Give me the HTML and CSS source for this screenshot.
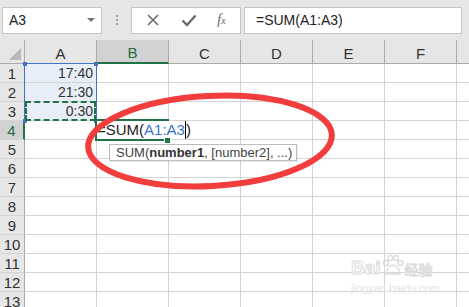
FILE: index.html
```html
<!DOCTYPE html>
<html lang="en">
<head>
  <meta charset="UTF-8">
  <title>SUM</title>
  <link rel="stylesheet" href="styles.css">
</head>
<body>
  <div class="app">
    <div class="formula-bar">
      <div class="name-box">
        <span>A3</span>
        <span class="drop"></span>
      </div>
      <div class="grip"><i></i><i></i><i></i></div>
      <div class="fx-buttons">
        <svg width="14" height="14" viewBox="0 0 14 14"><path d="M2 2 L12 12 M12 2 L2 12" stroke="#6b6b6b" stroke-width="1.6" fill="none"/></svg>
        <svg width="16" height="14" viewBox="0 0 16 14"><path d="M1.5 7.5 L6 12 L14.5 2.5" stroke="#6b6b6b" stroke-width="2.4" fill="none"/></svg>
        <span class="fx">f<small>x</small></span>
      </div>
      <div class="formula-input">=SUM(A1:A3)</div>
    </div>

    <div class="sheet" id="sheet"></div>

    <div class="range-box"><b class="c1"></b><b class="c2"></b><b class="c3"></b><b class="c4"></b></div>
    <div class="copy-box"></div>
    <div class="active-cell"></div>
    <div class="edit-text">=SUM(<span class="ref">A1:A3</span><span class="cursor"></span>)</div>
    <b class="handle"></b>
    <div class="tooltip">SUM(<b>number1</b>, [number2], ...)</div>

    <svg class="mark" width="469" height="307" viewBox="0 0 469 307">
      <ellipse cx="210" cy="141" rx="122" ry="45" transform="rotate(-3 210 141)" fill="none" stroke="#f23d3d" stroke-width="6"/>
    </svg>

    <div class="watermark">
      <div class="wm-top">
        <span class="wm-bai">Bai</span>
        <svg width="24" height="24" viewBox="0 0 24 24"><g fill="none" stroke="#dcdcdc" stroke-width="1.4"><circle cx="5" cy="9" r="2.5"/><circle cx="9.5" cy="4" r="2.5"/><circle cx="15" cy="4" r="2.5"/><circle cx="19.5" cy="9" r="2.5"/><path d="M5 20 Q6 12 12 11 Q18 12 19 20 Z"/></g></svg>
        <span class="wm-cn">经验</span>
      </div>
      <div class="wm-url">jingyan.baidu.com</div>
    </div>
  </div>

  <script>
    const sheet = document.getElementById('sheet');
    const cols = ['A', 'B', 'C', 'D', 'E', 'F', ''];
    const values = { 1: '17:40', 2: '21:30', 3: '0:30' };
    let html = '<div class="corner"><span></span></div>';
    cols.forEach(c => {
      html += `<div class="col-head${c === 'B' ? ' on' : ''}">${c}</div>`;
    });
    for (let r = 1; r <= 13; r++) {
      html += `<div class="row-head${r === 4 ? ' on' : ''}">${r}</div>`;
      cols.forEach(c => {
        let cls = 'cell';
        let text = '';
        if (c === 'A' && values[r]) {
          cls += ' picked';
          text = values[r];
        }
        html += `<div class="${cls}">${text}</div>`;
      });
    }
    sheet.innerHTML = html;
  </script>
</body>
</html>
```

FILE: styles.css
```css
body {
  margin: 0;
  font-family: 'Liberation Sans', Arial, sans-serif;
  background-color: #fff;
  overflow: hidden;
}

.app {
  position: relative;
  width: 469px;
  height: 307px;
  overflow: hidden;
}

.formula-bar {
  display: flex;
  align-items: center;
  height: 40px;
  background-color: #e6e6e6;
  padding-left: 2px;
}

.name-box {
  display: flex;
  align-items: center;
  justify-content: space-between;
  width: 100px;
  height: 27px;
  box-sizing: border-box;
  background-color: #fff;
  border: 1px solid #c6c6c6;
  padding: 0 6px 0 6px;
  font-size: 14px;
  color: #222;
}

.drop {
  width: 0;
  height: 0;
  border-left: 4px solid transparent;
  border-right: 4px solid transparent;
  border-top: 4px solid #777;
}

.grip {
  display: flex;
  flex-direction: column;
  gap: 2px;
  margin: 0 13px 0 14px;
}

.grip i {
  width: 2px;
  height: 2px;
  background-color: #a0a0a0;
}

.fx-buttons {
  display: flex;
  align-items: center;
  justify-content: space-around;
  width: 110px;
  height: 27px;
  box-sizing: border-box;
  background-color: #fff;
  border: 1px solid #c6c6c6;
  padding: 0 4px;
}

.fx {
  font-family: 'Liberation Serif', serif;
  font-style: italic;
  font-size: 14px;
  color: #666;
}

.fx small {
  font-size: 10px;
}

.formula-input {
  width: 218px;
  height: 27px;
  box-sizing: border-box;
  margin-left: 3px;
  background-color: #fff;
  border: 1px solid #c6c6c6;
  padding: 4px 0 0 11px;
  font-size: 14px;
  color: #222;
}

.sheet {
  display: grid;
  grid-template-columns: 25px repeat(7, 72px);
  grid-template-rows: 24px repeat(13, 19px);
}

.corner,
.col-head,
.row-head {
  background-color: #e6e6e6;
  color: #333;
  font-size: 15px;
  box-sizing: border-box;
}

.corner {
  display: flex;
  align-items: flex-end;
  justify-content: flex-end;
  border-right: 1px solid #ababab;
  border-bottom: 1px solid #ababab;
  padding: 0 3px 3px 0;
}

.corner span {
  width: 0;
  height: 0;
  border-left: 12px solid transparent;
  border-bottom: 12px solid #b9b9b9;
}

.col-head {
  display: flex;
  align-items: flex-end;
  justify-content: center;
  padding-bottom: 1px;
  border-right: 1px solid #ababab;
  border-bottom: 1px solid #ababab;
}

.col-head.on {
  background-color: #d2d2d2;
  color: #1e6b3e;
  border-bottom: 2px solid #217346;
}

.row-head {
  display: flex;
  align-items: center;
  justify-content: center;
  border-right: 1px solid #ababab;
  border-bottom: 1px solid #d4d4d4;
}

.row-head.on {
  background-color: #d2d2d2;
  color: #1e6b3e;
  border-right: 2px solid #217346;
}

.cell {
  box-sizing: border-box;
  border-right: 1px solid #d4d4d4;
  border-bottom: 1px solid #d4d4d4;
  font-size: 14px;
  color: #333;
  text-align: right;
  padding: 1px 3px 0 0;
}

.cell.picked {
  background-color: #e8eef8;
}

.range-box {
  position: absolute;
  left: 24px;
  top: 63px;
  width: 73px;
  height: 58px;
  box-sizing: border-box;
  border: 1.5px solid #4472c4;
  border-bottom: none;
}

.range-box b {
  position: absolute;
  width: 4px;
  height: 4px;
  background-color: #4472c4;
}

.range-box .c1 { left: -2px; top: -2px; }
.range-box .c2 { right: -2px; top: -2px; }
.range-box .c3 { left: -2px; bottom: -2px; }
.range-box .c4 { right: -2px; bottom: -2px; }

.copy-box {
  position: absolute;
  left: 25px;
  top: 101px;
  width: 71px;
  height: 20px;
  box-sizing: border-box;
  border: 2px dashed #217346;
}

.active-cell {
  position: absolute;
  left: 95px;
  top: 119px;
  width: 74px;
  height: 22px;
  box-sizing: border-box;
  border: 2px solid #217346;
}

.handle {
  position: absolute;
  left: 164px;
  top: 137px;
  width: 5px;
  height: 5px;
  background-color: #217346;
  border: 1px solid #fff;
}

.edit-text {
  position: absolute;
  left: 97px;
  top: 121px;
  height: 18px;
  padding-right: 2px;
  background-color: #fff;
  font-size: 15px;
  line-height: 18px;
  color: #222;
  white-space: nowrap;
  display: flex;
  align-items: center;
}

.edit-text .ref {
  color: #3a73c9;
}

.cursor {
  width: 1px;
  height: 18px;
  background-color: #000;
}

.tooltip {
  position: absolute;
  left: 109px;
  top: 144px;
  height: 17px;
  box-sizing: border-box;
  padding: 0 4px 0 6px;
  background-color: #fff;
  border: 1px solid #bdbdbd;
  box-shadow: 1px 1px 1px rgba(0, 0, 0, 0.08);
  font-size: 13px;
  line-height: 15px;
  color: #444;
  white-space: nowrap;
}

.tooltip b {
  color: #333;
}

.mark {
  position: absolute;
  left: 0;
  top: 0;
}

.watermark {
  position: absolute;
  left: 351px;
  top: 254px;
  color: #dadada;
}

.wm-top {
  display: flex;
  align-items: flex-end;
}

.wm-bai {
  font-size: 19px;
  font-weight: bold;
  line-height: 20px;
  color: #fff;
  -webkit-text-stroke: 1px #dcdcdc;
}

.wm-cn {
  font-family: 'Noto Sans CJK SC', sans-serif;
  font-size: 14px;
  line-height: 18px;
  color: #fff;
  -webkit-text-stroke: 1px #dcdcdc;
}

.wm-url {
  font-size: 11px;
  line-height: 14px;
  margin-top: 3px;
  color: #e4e4e4;
}
```
